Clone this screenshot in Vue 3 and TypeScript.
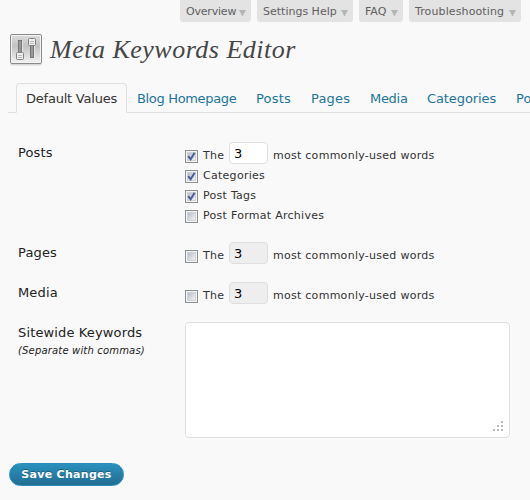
<script setup lang="ts">
import { ref } from 'vue'

interface Option {
  label: string
  checked: boolean
  count?: string
  suffix?: string
}
interface Row {
  title: string
  options: Option[]
}

const helpTabs = [
  { label: 'Overview', size: 'h-overview' },
  { label: 'Settings Help', size: 'h-settings' },
  { label: 'FAQ', size: 'h-faq' },
  { label: 'Troubleshooting', size: 'h-trouble' },
]
const tabs = [
  { label: 'Default Values', size: 't-default' },
  { label: 'Blog Homepage', size: 't-home' },
  { label: 'Posts', size: 't-posts' },
  { label: 'Pages', size: 't-pages' },
  { label: 'Media', size: 't-media' },
  { label: 'Categories', size: 't-cats' },
  { label: 'Post Tags', size: 't-tags' },
]
const active = ref(0)
const keywords = ref('')
const suffix = 'most commonly-used words'
const rows = ref<Row[]>([
  {
    title: 'Posts',
    options: [
      { label: 'The', checked: true, count: '3', suffix },
      { label: 'Categories', checked: true },
      { label: 'Post Tags', checked: true },
      { label: 'Post Format Archives', checked: false },
    ],
  },
  { title: 'Pages', options: [{ label: 'The', checked: false, count: '3', suffix }] },
  { title: 'Media', options: [{ label: 'The', checked: false, count: '3', suffix }] },
])
</script>

<template>
  <main class="page">
    <nav class="help">
      <a v-for="h in helpTabs" :key="h.label" class="help-tab" :class="h.size">
        <span>{{ h.label }}</span>
        <svg width="7" height="6" viewBox="0 0 7 6"><path d="M0 0H7L3.8 6H3.2Z" fill="#b5b5b5" /></svg>
      </a>
    </nav>

    <header class="heading">
      <svg class="logo" width="32" height="32" viewBox="0 0 32 32">
        <defs>
          <linearGradient id="plate" x1="0" y1="0" x2="0" y2="1">
            <stop offset="0" stop-color="#dedede" />
            <stop offset=".4" stop-color="#c2c2c2" />
            <stop offset="1" stop-color="#f4f4f4" />
          </linearGradient>
        </defs>
        <rect x="0" y="1" width="32" height="30.5" rx="2.5" fill="#d8d8d8" />
        <rect x=".5" y=".5" width="31" height="29" rx="1.5" fill="url(#plate)" stroke="#8a8a8a" />
        <rect x="1.5" y="1.5" width="29" height="27" rx=".5" fill="none" stroke="#f3f3f3" />
        <path d="M12.5 7V18M24.5 12V25" stroke="#e6e6e6" />
        <rect x="8.5" y="6.5" width="3" height="13" fill="#999" stroke="#757575" />
        <rect x="20.5" y="11.5" width="3" height="12" fill="#999" stroke="#757575" />
        <rect x="6.5" y="18.5" width="7" height="7" rx="1" fill="#f0f0f0" stroke="#808080" />
        <rect x="18.5" y="4.5" width="7" height="7" rx="1" fill="#f0f0f0" stroke="#808080" />
        <path d="M8 21.5H12M8 23.5H12M20 7.5H24M20 9.5H24" stroke="#b8b8b8" />
      </svg>
      <h2>Meta Keywords Editor</h2>
    </header>

    <nav class="tabs">
      <a
        v-for="(t, i) in tabs"
        :key="t.label"
        class="tab"
        :class="[t.size, { active: i === active }]"
        @click="active = i"
      ><span>{{ t.label }}</span></a>
    </nav>

    <form class="form" @submit.prevent>
      <section v-for="r in rows" :key="r.title" class="row">
        <div class="label">{{ r.title }}</div>
        <div class="options">
          <label v-for="o in r.options" :key="o.label" class="option">
            <input v-model="o.checked" class="native" type="checkbox" />
            <svg class="check" width="13" height="13" viewBox="0 0 13 13">
              <defs>
                <linearGradient id="box" x1="0" y1="0" x2="1" y2="1">
                  <stop offset="0" stop-color="#b4bac4" />
                  <stop offset="1" stop-color="#f6f6f6" />
                </linearGradient>
              </defs>
              <rect x=".5" y=".5" width="12" height="12" fill="#f4f4f4" stroke="#8e8f8f" />
              <rect x="2.5" y="2.5" width="8" height="8" fill="url(#box)" stroke="#d0d3d8" />
              <path v-if="o.checked" d="M3.2 6.2L5.6 9.2L9.7 2.8" fill="none" stroke="#4a5f97" stroke-width="2" />
            </svg>
            <span class="text">{{ o.label }}</span>
            <template v-if="o.count">
              <input v-model="o.count" class="count" type="text" :disabled="!o.checked" />
              <span class="text">{{ o.suffix }}</span>
            </template>
          </label>
        </div>
      </section>

      <section class="row">
        <div class="label tall">
          Sitewide Keywords
          <em>(Separate with commas)</em>
        </div>
        <div class="area">
          <textarea v-model="keywords"></textarea>
          <svg class="grip" width="10" height="10" viewBox="0 0 10 10">
            <path d="M8 0h2v2h-2zM4 4h2v2h-2zM8 4h2v2h-2zM0 8h2v2h-2zM4 8h2v2h-2zM8 8h2v2h-2z" fill="#b8b8b8" />
          </svg>
        </div>
      </section>

      <button class="save" type="submit">Save Changes</button>
    </form>
  </main>
</template>

<style>
body {
  background: #f9f9f9;
  overflow: hidden;
}
</style>

<style scoped>
.page {
  width: 530px;
  height: 500px;
  overflow: hidden;
  background: #f9f9f9;
  color: #222;
  font-family: Verdana, 'DejaVu Sans', sans-serif;
  font-size: 13px;
}
.help {
  display: flex;
  gap: 6px;
  padding-left: 180px;
  height: 22px;
}
.help-tab {
  box-sizing: border-box;
  display: flex;
  flex: none;
  justify-content: space-between;
  padding: 0 5px 0 6px;
  border-radius: 0 0 3px 3px;
  background: #e3e3e3;
  color: #606060;
  font-size: 11px;
  line-height: 24px;
  white-space: nowrap;
}
.help-tab svg {
  margin-top: 10px;
  flex: none;
}
.h-overview {
  width: 71px;
  letter-spacing: -0.2px;
}
.h-settings { width: 96px; }
.h-faq { width: 44px; }
.h-trouble {
  width: 112px;
  letter-spacing: 0.12px;
}
.heading {
  display: flex;
  height: 61px;
  padding-left: 10px;
}
.logo {
  flex: none;
  margin-top: 12px;
}
h2 {
  margin: 10px 0 0 8px;
  color: #464646;
  font: italic 26px/36px Georgia, 'Liberation Serif', serif;
  letter-spacing: 0.5px;
  white-space: nowrap;
}
.tabs {
  display: flex;
  box-sizing: border-box;
  height: 30px;
  margin-left: 8px;
  padding-left: 8px;
  border-bottom: 1px solid #dfdfdf;
}
.tab {
  box-sizing: border-box;
  flex: none;
  height: 30px;
  padding-left: 10px;
  color: #21759b;
  line-height: 32px;
  white-space: nowrap;
  cursor: pointer;
}
.tab.active {
  padding-left: 9px;
  border: 1px solid #dfdfdf;
  border-bottom-color: #f9f9f9;
  border-radius: 4px 4px 0 0;
  color: #333;
  line-height: 30px;
}
.t-default {
  width: 111px;
  letter-spacing: -0.22px;
}
.t-home {
  width: 119px;
  letter-spacing: -0.33px;
}
.t-posts {
  width: 55px;
  letter-spacing: 0.2px;
}
.t-pages {
  width: 59px;
  letter-spacing: 0.2px;
}
.t-media {
  width: 57px;
  letter-spacing: -0.3px;
}
.t-cats {
  width: 89px;
  letter-spacing: -0.1px;
}
.form {
  display: flex;
  flex-direction: column;
  align-items: flex-start;
  padding: 32px 0 0 9px;
}
.row {
  display: flex;
  margin-bottom: 20px;
}
.row:nth-child(3) {
  margin-bottom: 17px;
}
.label {
  width: 167px;
  padding-left: 9px;
  line-height: 16px;
  letter-spacing: 0.14px;
}
.label.tall {
  padding-top: 3px;
}
.label em {
  display: block;
  margin-top: 2px;
  font-size: 10px;
  letter-spacing: 0.17px;
}
.options {
  color: #333;
  font-size: 11px;
  letter-spacing: 0.28px;
}
.option {
  display: flex;
  align-items: center;
  height: 20px;
}
.native {
  display: none;
}
.check {
  margin: 3px 5px 0 0;
}
.text {
  white-space: nowrap;
}
.count {
  box-sizing: border-box;
  width: 39px;
  height: 22px;
  margin: -4px 5px 0 4.6px;
  padding: 0 4px;
  border: 1px solid #dfdfdf;
  border-radius: 4px;
  background: #fff;
  color: #000;
  font: 13px Verdana, 'DejaVu Sans', sans-serif;
}
.count:disabled {
  background: #eee;
}
.area {
  position: relative;
  height: 116px;
}
textarea {
  box-sizing: border-box;
  display: block;
  width: 325px;
  height: 116px;
  border: 1px solid #dfdfdf;
  border-radius: 4px;
  background: #fff;
  resize: none;
  outline: none;
}
.grip {
  position: absolute;
  right: 7px;
  bottom: 7px;
}
.save {
  width: 115px;
  height: 23px;
  margin-top: 5px;
  padding: 0;
  border: 1px solid #298cba;
  border-radius: 12px;
  background: linear-gradient(#2a91bd, #216d92);
  color: #fff;
  font: bold 11px Verdana, 'DejaVu Sans', sans-serif;
  letter-spacing: 0.3px;
  text-shadow: 0 -1px 0 rgba(0, 0, 0, 0.3);
  white-space: nowrap;
}
</style>
